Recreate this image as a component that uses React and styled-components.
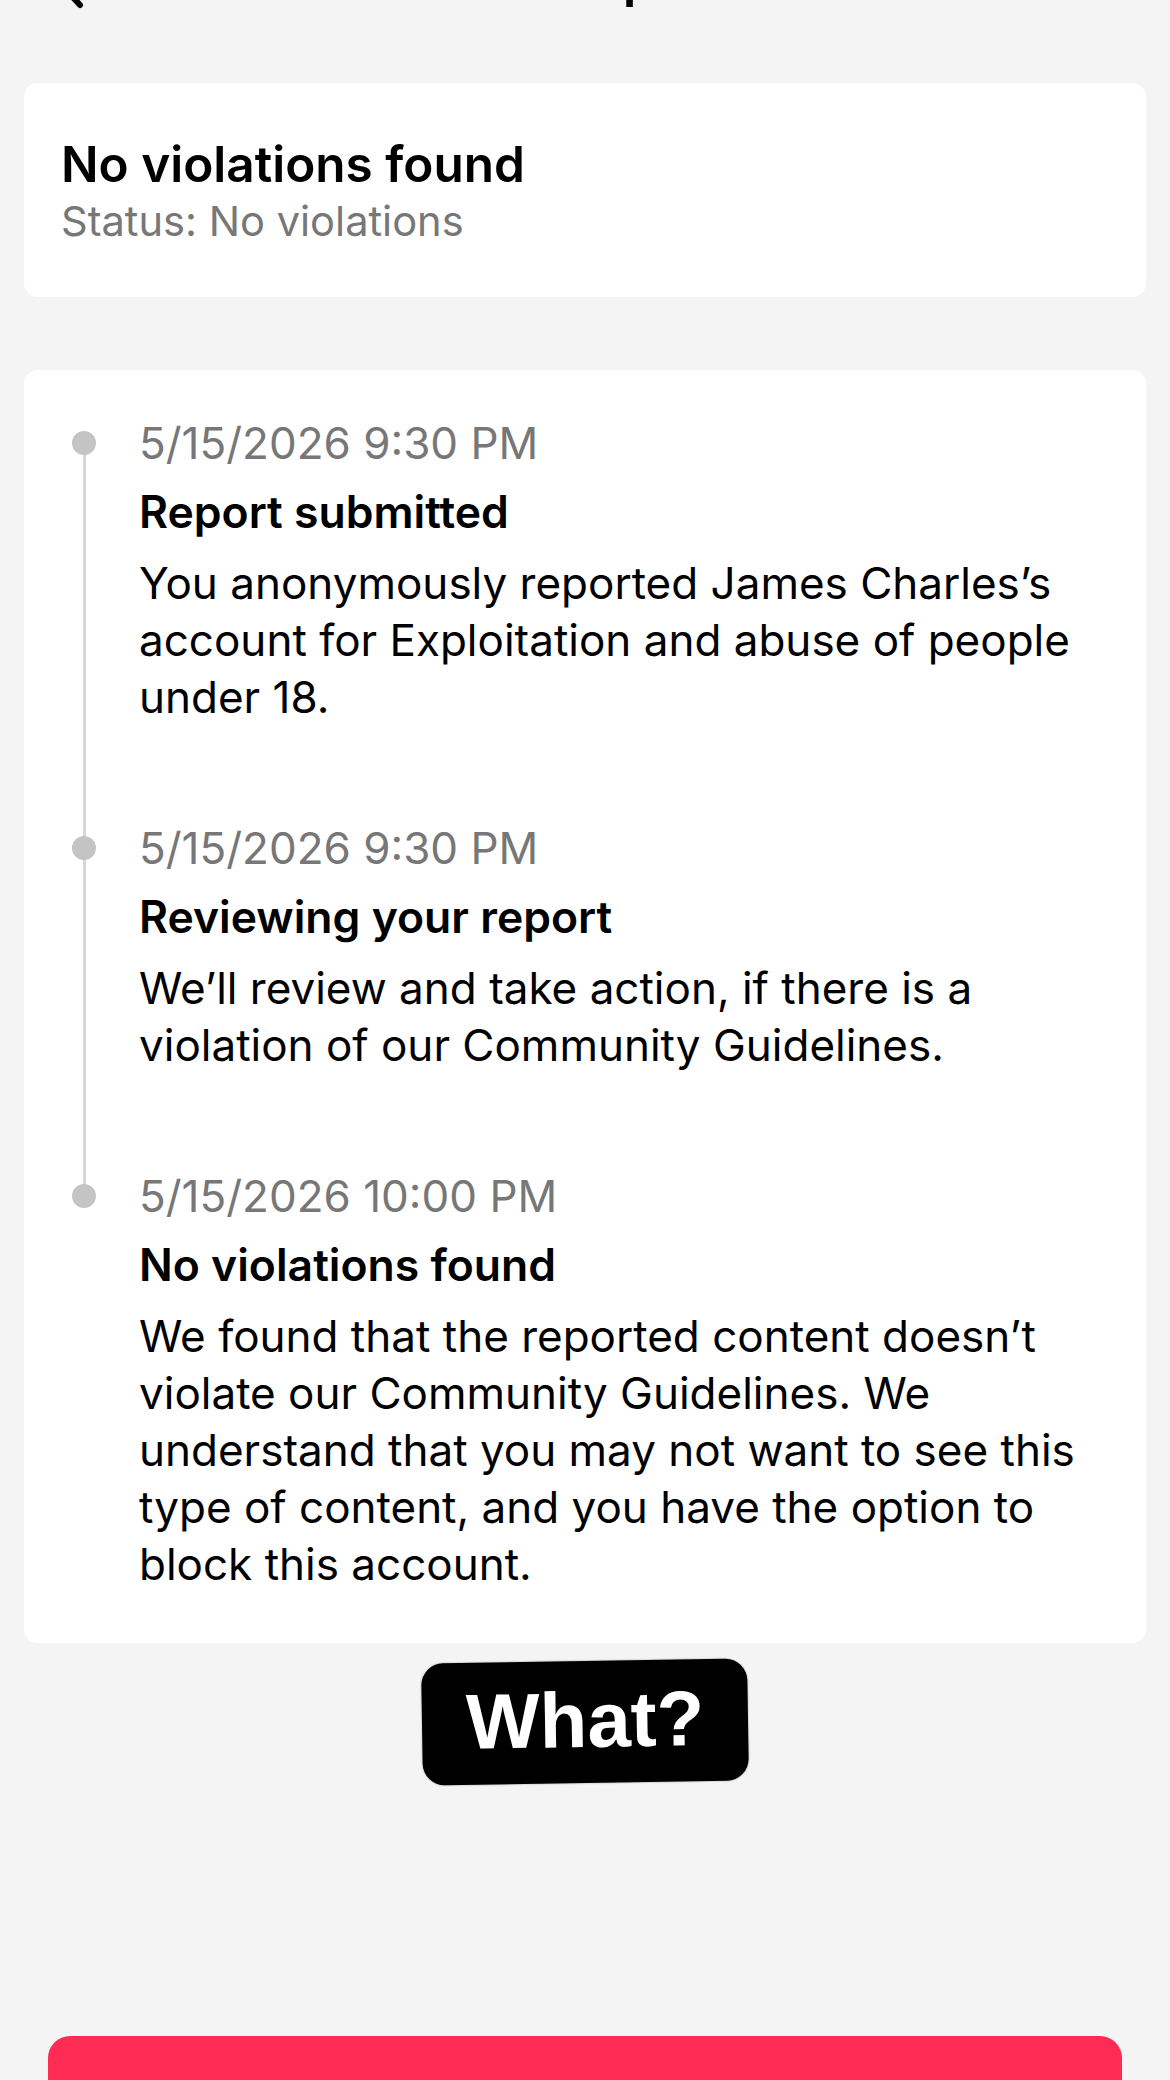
import styled, { createGlobalStyle } from "styled-components";

const GlobalStyle = createGlobalStyle`
    html, body {
        margin: 0;
        padding: 0;
        background: #f4f4f4;
    }
    body {
        font-family: "Inter", "Noto Sans", sans-serif;
        color: #000;
        -webkit-font-smoothing: antialiased;
    }
`;

const Page = styled.div`
    width: 1170px;
    height: 2080px;
    overflow: hidden;
    background: #f4f4f4;
    display: flex;
    flex-direction: column;
`;

// header sits mostly above the visible area, only descenders peek in
const Header = styled.div`
    height: 132px;
    margin-top: -87px;
    flex-shrink: 0;
    display: grid;
    grid-template-columns: 132px 1fr 132px;
    align-items: center;
`;

const BackButton = styled.div`
    display: flex;
    align-items: center;
    padding-left: 48px;
`;

const HeaderTitle = styled.h1`
    margin: 0;
    text-align: center;
    font-size: 52px;
    line-height: 62px;
    font-weight: 600;
`;

const Card = styled.section`
    background: #fff;
    border-radius: 14px;
    margin: ${(p) => p.$top}px 24px 0;
    padding: ${(p) => p.$pad};
`;

const StatusTitle = styled.div`
    font-size: 49.5px;
    line-height: 62px;
    font-weight: 600;
`;

const StatusText = styled.div`
    font-size: 41.6px;
    line-height: 52px;
    color: #777;
`;

const Timeline = styled.div`
    display: flex;
    flex-direction: column;
`;

const Item = styled.div`
    position: relative;
    display: grid;
    grid-template-columns: 48px 1fr;
    column-gap: 31px;
    padding-bottom: ${(p) => (p.$last ? "0" : "94px")};

    &::after {
        content: "";
        display: ${(p) => (p.$last ? "none" : "block")};
        position: absolute;
        left: 22.5px;
        width: 3px;
        top: 28px;
        bottom: -29px;
        background: #d6d6d6;
    }
`;

const Rail = styled.div`
    position: relative;
    z-index: 1;
    display: flex;
    justify-content: center;
    padding-top: 16px;
`;

const Dot = styled.span`
    width: 24px;
    height: 24px;
    border-radius: 50%;
    background: #c4c4c4;
`;

const Content = styled.div`
    padding-right: 30px;
`;

const Stamp = styled.div`
    font-size: 44px;
    line-height: 57px;
    color: #777;
`;

const ItemTitle = styled.div`
    margin-top: 12px;
    font-size: 44.5px;
    line-height: 57px;
    font-weight: 600;
`;

const Body = styled.p`
    margin: 14px 0 0;
    font-size: 44px;
    line-height: 57px;
`;

const StickerRow = styled.div`
    display: flex;
    justify-content: center;
    margin-top: 18px;
`;

const Sticker = styled.div`
    background: #000;
    color: #fff;
    font-family: "Liberation Sans", Arial, sans-serif;
    font-weight: 700;
    font-size: 78px;
    line-height: 78px;
    padding: 20px 44px 24px;
    border-radius: 22px;
    transform: rotate(-0.9deg);
    box-shadow: 0 0 2px rgba(0, 0, 0, 0.4);
`;

const Footer = styled.div`
    margin-top: 253px;
    padding: 0 48px;
`;

const PrimaryButton = styled.button`
    width: 100%;
    height: 132px;
    border: none;
    border-radius: 22px;
    background: #fe2c55;
`;

const steps = [
    {
        time: "5/15/2026 9:30 PM",
        title: "Report submitted",
        text: "You anonymously reported James Charles\u2019s account for Exploitation and abuse of people under 18.",
    },
    {
        time: "5/15/2026 9:30 PM",
        title: "Reviewing your report",
        text: "We\u2019ll review and take action, if there is a violation of our Community Guidelines.",
    },
    {
        time: "5/15/2026 10:00 PM",
        title: "No violations found",
        text: "We found that the reported content doesn\u2019t violate our Community Guidelines. We understand that you may not want to see this type of content, and you have the option to block this account.",
    },
];

const App = () => {
    return (
        <>
            <GlobalStyle />
            <Page>
                <Header>
                    <BackButton>
                        <svg width="40" height="60" viewBox="0 0 40 60" fill="none">
                            <path d="M32 4 L8 30 L32 56" stroke="#000" strokeWidth="6" strokeLinecap="round" strokeLinejoin="round" />
                        </svg>
                    </BackButton>
                    <HeaderTitle>Your report</HeaderTitle>
                    <div />
                </Header>

                <Card $top={38} $pad="50px 37px 50px">
                    <StatusTitle>No violations found</StatusTitle>
                    <StatusText>Status: No violations</StatusText>
                </Card>

                <Card $top={73} $pad="45px 0 50px 36px">
                    <Timeline>
                        {steps.map((s, i) => (
                            <Item key={i} $last={i === steps.length - 1}>
                                <Rail>
                                    <Dot />
                                </Rail>
                                <Content>
                                    <Stamp>{s.time}</Stamp>
                                    <ItemTitle>{s.title}</ItemTitle>
                                    <Body>{s.text}</Body>
                                </Content>
                            </Item>
                        ))}
                    </Timeline>
                </Card>

                <StickerRow>
                    <Sticker>What?</Sticker>
                </StickerRow>

                <Footer>
                    <PrimaryButton aria-label="Block" />
                </Footer>
            </Page>
        </>
    );
};

export default App;
